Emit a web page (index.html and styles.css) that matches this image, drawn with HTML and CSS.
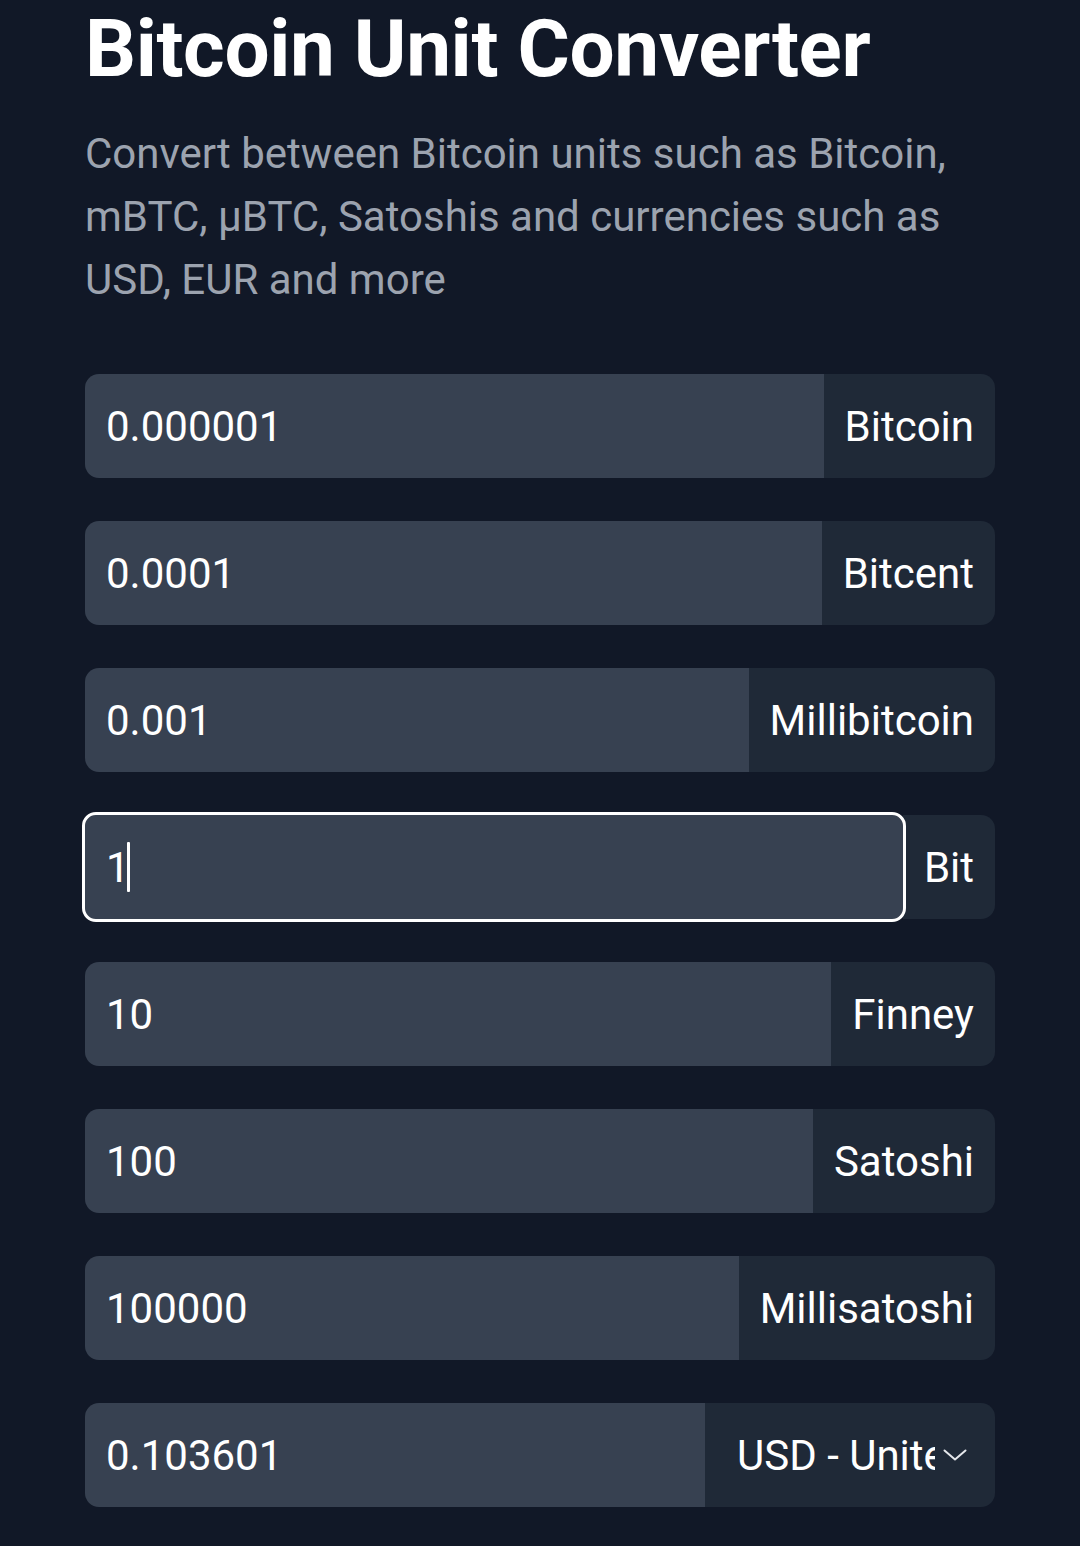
FILE: index.html
```html
<!DOCTYPE html>
<html lang="en">
<head>
<meta charset="utf-8">
<title>Bitcoin Unit Converter</title>
<link rel="stylesheet" href="styles.css">
</head>
<body>
<main class="page">
  <h1 class="title">Bitcoin Unit Converter</h1>
  <p class="lead">Convert between Bitcoin units such as Bitcoin, mBTC, µBTC, Satoshis and currencies such as USD, EUR and more</p>
  <div class="fields">
    <label class="field"><input class="field-input" type="text" value="0.000001"><span class="field-unit">Bitcoin</span></label>
    <label class="field"><input class="field-input" type="text" value="0.0001"><span class="field-unit">Bitcent</span></label>
    <label class="field"><input class="field-input" type="text" value="0.001"><span class="field-unit">Millibitcoin</span></label>
    <label class="field">
      <span class="field-box field-box--focus">
        <input class="field-input field-input--focus" type="text" value="1">
        <span class="caret"></span>
      </span>
      <span class="field-unit">Bit</span>
    </label>
    <label class="field"><input class="field-input" type="text" value="10"><span class="field-unit">Finney</span></label>
    <label class="field"><input class="field-input" type="text" value="100"><span class="field-unit">Satoshi</span></label>
    <label class="field"><input class="field-input" type="text" value="100000"><span class="field-unit">Millisatoshi</span></label>
    <label class="field">
      <input class="field-input" type="text" value="0.103601">
      <span class="select-wrap">
        <select class="field-select">
          <option>USD - United States Dollar</option>
          <option>EUR - Euro</option>
        </select>
        <svg class="chevron" viewBox="0 0 24 12" width="24" height="12" aria-hidden="true"><path d="M1.5 1.5 L12 10.5 L22.5 1.5" fill="none" stroke="#e5e7eb" stroke-width="2" stroke-linecap="round" stroke-linejoin="round"/></svg>
      </span>
    </label>
  </div>
</main>
</body>
</html>
```
FILE: styles.css
```css
* { box-sizing: border-box; }
html, body {
  margin: 0;
  padding: 0;
  background: #111827;
}
body {
  font-family: Roboto, "Liberation Sans", Arial, sans-serif;
  color: #ffffff;
  height: 1546px;
  overflow: hidden;
}
.page {
  width: 910px;
  margin: 0 0 0 85px;
  padding-top: 5px;
}
.title {
  margin: 0;
  font-size: 80px;
  line-height: 89px;
  font-weight: 700;
  letter-spacing: -0.4px;
  color: #ffffff;
}
.lead {
  margin: 28px 0 0;
  font-size: 42px;
  line-height: 63px;
  color: #9ca3af;
}
.fields {
  margin-top: 63px;
  display: flex;
  flex-direction: column;
  gap: 43px;
}
.field {
  display: flex;
  height: 104px;
  width: 100%;
}
.field-input {
  flex: 1 1 auto;
  min-width: 0;
  height: 100%;
  border: 0;
  margin: 0;
  padding: 0 21px;
  background: #374151;
  color: #ffffff;
  font-family: inherit;
  font-size: 42px;
  border-radius: 14px 0 0 14px;
  outline: none;
}
.field-unit {
  flex: 0 0 auto;
  display: flex;
  align-items: center;
  padding: 0 21px;
  background: #1f2937;
  border-radius: 0 14px 14px 0;
  font-size: 42px;
  color: #ffffff;
  white-space: nowrap;
}
.field-box {
  flex: 1 1 auto;
  display: flex;
  min-width: 0;
}
.field-box--focus {
  position: relative;
}
.field-input--focus {
  border-radius: 11px;
  outline: 3px solid #ffffff;
  outline-offset: 0;
  caret-color: transparent;
}
.caret {
  position: absolute;
  left: 42px;
  top: 27px;
  width: 3px;
  height: 50px;
  background: #ffffff;
  border-radius: 1px;
}
.select-wrap {
  position: relative;
  flex: 0 0 290px;
  display: flex;
}
.field-select {
  -webkit-appearance: none;
  appearance: none;
  width: 100%;
  height: 100%;
  margin: 0;
  border: 0;
  padding: 0 60px 0 32px;
  background: #1f2937;
  color: #ffffff;
  font-family: inherit;
  font-size: 42px;
  border-radius: 0 14px 14px 0;
  outline: none;
}
.chevron {
  position: absolute;
  left: 238px;
  top: 46px;
  pointer-events: none;
}
```
